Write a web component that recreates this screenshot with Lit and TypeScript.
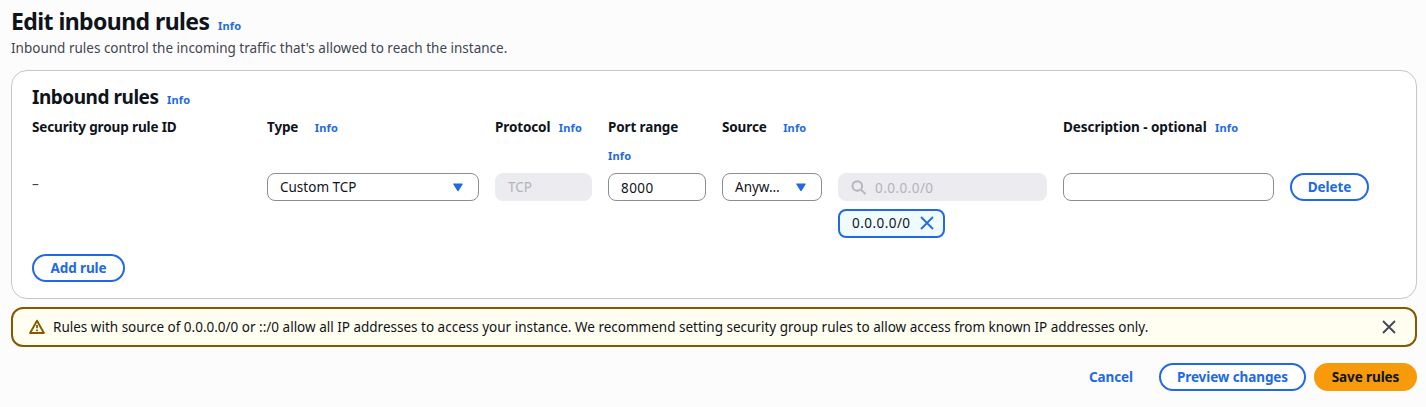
import { LitElement, html, css, svg } from "lit";
import { customElement } from "lit/decorators.js";

const caret = html`<svg class="caret" width="12" height="9" viewBox="0 0 12 9">
  ${svg`<path d="M1.8 1h8.4L6 7.6z" fill="#2169e4" stroke="#2169e4" stroke-width="1.2" stroke-linejoin="round" />`}
</svg>`;

const cross = html`<svg width="16" height="16" viewBox="0 0 16 16">
  ${svg`<path d="M2 2l12 12M14 2L2 14" fill="none" stroke="currentColor" stroke-width="1.8" />`}
</svg>`;

const info = () => html`<a class="info">Info</a>`;

@customElement("app-root")
export class AppRoot extends LitElement {
  static styles = css`
    :host {
      display: block;
      box-sizing: border-box;
      height: 407px;
      padding: 7px 9px 0 11px;
      overflow: hidden;
      background: #fcfcfd;
      color: #0f141a;
      font: 13.5px/20px "Noto Sans", "Open Sans", sans-serif;
    }
    * { box-sizing: border-box; }
    svg { display: block; flex: none; }
    h1, h2, p { margin: 0; }
    h1 { font-size: 23px; line-height: 28px; letter-spacing: -0.57px; }
    h2 { font-size: 19px; line-height: 24px; letter-spacing: -0.47px; }
    .title { display: flex; align-items: baseline; gap: 8.5px; }
    .info {
      color: #2169e4;
      font-size: 11px;
      line-height: 20px;
      font-weight: 700;
      letter-spacing: 0.15px;
    }
    .sub { height: 20px; margin-top: 2px; color: #424650; }
    .card {
      height: 229px;
      margin-top: 12px;
      padding: 14px 20px 0;
      background: #fff;
      border: 1px solid #c6c6cd;
      border-radius: 16px;
    }
    .grid {
      display: grid;
      grid-template-columns: 219px 212px 97px 98px 100px 209px 211px 79px;
      column-gap: 16px;
      align-items: start;
    }
    .head { height: 56px; margin-top: 7px; }
    .label {
      display: flex;
      flex-wrap: wrap;
      align-items: baseline;
      row-gap: 9px;
      font-weight: 700;
      letter-spacing: -0.13px;
      white-space: nowrap;
    }
    .g16 { column-gap: 16.5px; }
    .g8 { column-gap: 8.5px; }
    .wide { letter-spacing: -0.06px; }
    .src { grid-column: span 2; }
    .dash { margin-top: 1px; color: #424650; }
    .box {
      display: flex;
      align-items: center;
      justify-content: space-between;
      height: 28px;
      padding: 0 12px;
      border: 1px solid #8c8c94;
      border-radius: 8px;
      background: #fff;
      white-space: nowrap;
    }
    .select { padding-right: 14px; }
    .off { background: #ebebf0; border-color: #ebebf0; color: #b4b4bb; }
    .search { justify-content: flex-start; gap: 8px; }
    .box.digits { padding-top: 1px; }
    .digits { letter-spacing: 0.45px; }
    .token {
      display: inline-flex;
      align-items: center;
      gap: 8px;
      width: 107px;
      height: 29px;
      margin-top: 8px;
      padding: 0 0 1px 12px;
      border: 2px solid #2169e4;
      border-radius: 8px;
      background: #f0fbff;
    }
    .token svg { color: #2169e4; }
    .btn {
      display: inline-flex;
      align-items: center;
      justify-content: center;
      height: 28px;
      border: 2px solid #2169e4;
      border-radius: 20px;
      background: #fff;
      color: #2169e4;
      font-weight: 700;
      letter-spacing: -0.1px;
      white-space: nowrap;
    }
    .delete { width: 79px; }
    .add { width: 93px; margin-top: 16px; }
    .alert {
      display: flex;
      align-items: center;
      height: 40px;
      margin-top: 8px;
      padding: 0 18px 0 16px;
      border: 2px solid #855900;
      border-radius: 12px;
      background: #fffef0;
    }
    .alert p { flex: 1; margin-left: 8px; white-space: nowrap; }
    .close { color: #424650; }
    .actions { display: flex; justify-content: flex-end; gap: 8px; margin-top: 16px; }
    .cancel { width: 80px; border-color: transparent; background: none; }
    .preview { width: 147px; }
    .save { width: 103px; border-color: #f79a0b; background: #f79a0b; color: #0f141a; }
  `;

  render() {
    return html`
      <header>
        <div class="title"><h1>Edit inbound rules</h1>${info()}</div>
        <p class="sub">Inbound rules control the incoming traffic that's allowed to reach the instance.</p>
      </header>

      <section class="card">
        <div class="title"><h2>Inbound rules</h2>${info()}</div>
        <div class="grid head">
          <div class="label">Security group rule ID</div>
          <div class="label g16"><span>Type</span>${info()}</div>
          <div class="label g8"><span>Protocol</span>${info()}</div>
          <div class="label g8"><span>Port range</span>${info()}</div>
          <div class="label g16 src"><span>Source</span>${info()}</div>
          <div class="label g8 wide"><span>Description - optional</span>${info()}</div>
        </div>
        <div class="grid">
          <div class="dash">–</div>
          <div class="box select"><span>Custom TCP</span>${caret}</div>
          <div class="box off">TCP</div>
          <div class="box digits">8000</div>
          <div class="box select"><span>Anyw…</span>${caret}</div>
          <div>
            <div class="box off search digits">
              <svg width="16" height="16" viewBox="0 0 16 16">
                <circle cx="6.3" cy="6" r="4.8" fill="none" stroke="#b4b4bb" stroke-width="1.9" />
                <path d="M9.8 9.5l4.8 4.6" stroke="#b4b4bb" stroke-width="1.9" />
              </svg>
              <span>0.0.0.0/0</span>
            </div>
            <div class="token digits"><span>0.0.0.0/0</span>${cross}</div>
          </div>
          <div class="box"></div>
          <div class="btn delete">Delete</div>
        </div>
        <div class="btn add">Add rule</div>
      </section>

      <section class="alert">
        <svg width="16" height="16" viewBox="0 0 16 16">
          <path d="M8 1.7L14.9 14H1.1z" fill="none" stroke="#855900" stroke-width="1.9" stroke-linejoin="round" />
          <path d="M8 6v3.2M8 10.4v1.8" stroke="#855900" stroke-width="1.8" />
        </svg>
        <p>Rules with source of 0.0.0.0/0 or ::/0 allow all IP addresses to access your instance. We recommend setting security group rules to allow access from known IP addresses only.</p>
        <div class="close">${cross}</div>
      </section>

      <footer class="actions">
        <div class="btn cancel">Cancel</div>
        <div class="btn preview">Preview changes</div>
        <div class="btn save">Save rules</div>
      </footer>
    `;
  }
}
